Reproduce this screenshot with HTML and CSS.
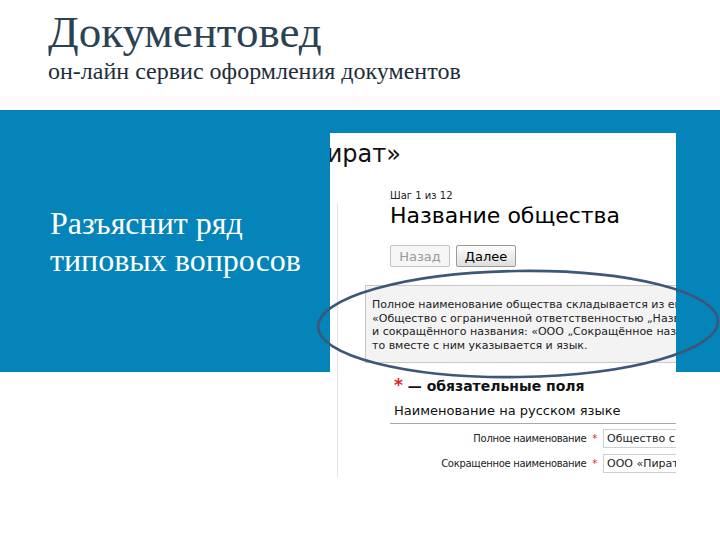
FILE: index.html
```html
<!DOCTYPE html>
<html lang="ru">
<head>
<meta charset="utf-8">
<title>Документовед</title>
<link rel="stylesheet" href="styles.css">
</head>
<body>
<div class="slide">
  <header class="head">
    <h1 class="title">Документовед</h1>
    <p class="subtitle">он-лайн сервис оформления документов</p>
  </header>
  <section class="stage">
    <div class="band">
      <p class="lead">Разъяснит ряд<br>типовых вопросов</p>
    </div>
    <div class="shot">
      <div class="shot-title">«Пират»</div>
      <div class="step">Шаг 1 из 12</div>
      <div class="main">
        <div class="heading">Название общества</div>
        <div class="buttons">
          <span class="btn btn-off">Назад</span>
          <span class="btn btn-on">Далее</span>
        </div>
        <div class="info">
          <div>Полное наименование общества складывается из его организационно-правовой формы</div>
          <div>«Общество с ограниченной ответственностью „Название“»</div>
          <div>и сокращённого названия: «ООО „Сокращённое название“». Если название иностранное,</div>
          <div>то вместе с ним указывается и язык.</div>
        </div>
        <div class="required"><span class="star">*</span> — обязательные поля</div>
        <div class="section">Наименование на русском языке</div>
        <div class="form">
          <div class="label">Полное наименование <span class="mark">*</span></div>
          <div class="input">Общество с ограниченной</div>
          <div class="label">Сокращенное наименование <span class="mark">*</span></div>
          <div class="input">ООО «Пират»</div>
        </div>
      </div>
    </div>
  </section>
  <svg class="oval" width="720" height="540" viewBox="0 0 720 540" aria-hidden="true">
    <ellipse cx="518" cy="324" rx="200" ry="53" fill="none" stroke="#3d5778" stroke-width="2.6" transform="rotate(-0.8 518 324)"/>
  </svg>
</div>
</body>
</html>
```
FILE: styles.css
```css
html, body {
  margin: 0;
  padding: 0;
  background: #ffffff;
}
.slide {
  position: relative;
  width: 720px;
  height: 540px;
  overflow: hidden;
  background: #ffffff;
}
.head {
  height: 110px;
  box-sizing: border-box;
  padding: 7px 0 0 48px;
  background: linear-gradient(to bottom, #ffffff 0, #ffffff 95px, #fdf8fa 97px, #fafcfa 107px, #ffffff 110px);
}
.title {
  margin: 0;
  font-family: "Liberation Serif", "DejaVu Serif", serif;
  font-weight: normal;
  font-size: 45px;
  line-height: 50px;
  color: #2b4252;
}
.subtitle {
  margin: 0;
  font-family: "Liberation Serif", "DejaVu Serif", serif;
  font-size: 24px;
  line-height: 28px;
  color: #1e2d3a;
}
.stage {
  position: relative;
  height: 430px;
}
.band {
  height: 262px;
  box-sizing: border-box;
  background: #0484b8;
  padding: 95px 0 0 50px;
}
.lead {
  margin: 0;
  font-family: "Liberation Serif", "DejaVu Serif", serif;
  font-size: 32px;
  line-height: 37px;
  color: #ffffff;
}
.shot {
  position: absolute;
  left: 330px;
  top: 23px;
  width: 346px;
  height: 345px;
  background: #ffffff;
  overflow: hidden;
  font-family: "DejaVu Sans", Verdana, sans-serif;
  color: #111111;
}
.shot-title {
  padding-top: 7px;
  margin-left: -36px;
  font-size: 24px;
  line-height: 28px;
  white-space: nowrap;
}
.step {
  margin-top: 21px;
  padding-left: 60px;
  font-size: 10px;
  line-height: 13px;
  color: #222222;
}
.main {
  margin-left: 7px;
  border-left: 1px solid #e4e4e4;
  padding-left: 52px;
  height: 300px;
}
.heading {
  margin-top: 1px;
  font-size: 22px;
  line-height: 26px;
  white-space: nowrap;
  color: #000000;
}
.buttons {
  margin-top: 16px;
  display: flex;
  gap: 6px;
}
.btn {
  box-sizing: border-box;
  height: 22px;
  display: flex;
  align-items: center;
  justify-content: center;
  font-size: 13px;
  border-radius: 2px;
}
.btn-off {
  width: 60px;
  border: 1px solid #c4c4c4;
  background: #f6f6f6;
  color: #9a9a9a;
}
.btn-on {
  width: 60px;
  border: 1px solid #9a9a9a;
  background: linear-gradient(to bottom, #fdfdfd, #dedede);
  color: #000000;
}
.info {
  margin-top: 18px;
  margin-left: -25px;
  width: 420px;
  height: 78px;
  box-sizing: border-box;
  border: 1px solid #c8c8c8;
  background: #f3f3f3;
  padding: 12px 0 0 6px;
  font-size: 11px;
  line-height: 13.5px;
  white-space: nowrap;
  color: #222222;
}
.required {
  margin-top: 12px;
  padding-left: 4px;
  font-size: 14px;
  line-height: 20px;
  font-weight: bold;
  white-space: nowrap;
  color: #111111;
}
.star {
  color: #d8262a;
  font-size: 17px;
}
.section {
  margin-top: 6px;
  padding: 0 0 3px 4px;
  font-size: 13px;
  line-height: 18px;
  border-bottom: 1px solid #a8a8a8;
  white-space: nowrap;
  margin-right: -20px;
}
.form {
  margin-top: 5px;
  display: grid;
  grid-template-columns: 207px 120px;
  column-gap: 6px;
  row-gap: 6px;
  align-items: center;
}
.label {
  text-align: right;
  font-size: 10px;
  letter-spacing: -0.3px;
  white-space: nowrap;
  color: #222222;
}
.mark {
  color: #d8262a;
  margin-left: 3px;
}
.input {
  box-sizing: border-box;
  height: 19px;
  border: 1px solid #cfcfcf;
  padding: 2px 0 0 3px;
  font-size: 11px;
  line-height: 14px;
  white-space: nowrap;
  overflow: hidden;
  color: #222222;
}
.oval {
  position: absolute;
  left: 0;
  top: 0;
  pointer-events: none;
}
```
